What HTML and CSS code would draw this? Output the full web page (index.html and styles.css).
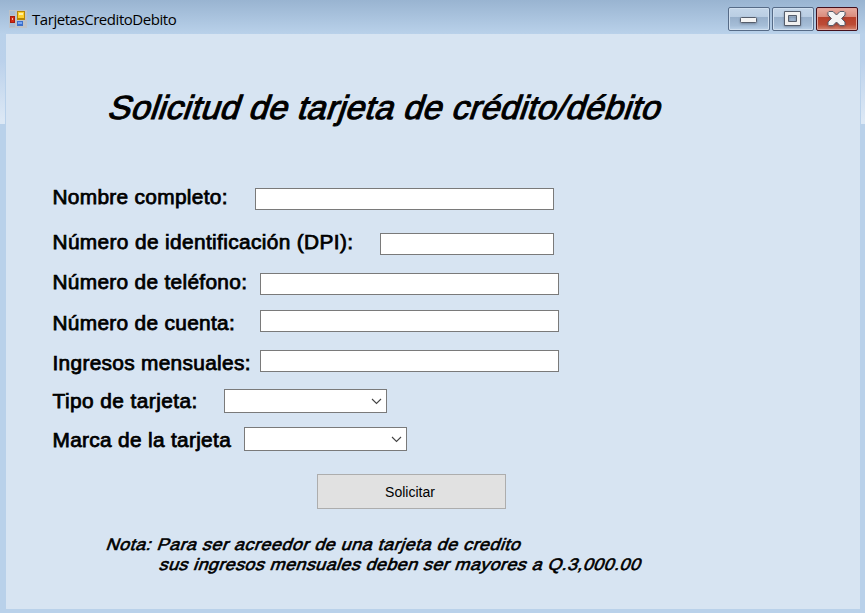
FILE: index.html
```html
<!DOCTYPE html>
<html lang="es">
<head>
<meta charset="utf-8">
<title>TarjetasCreditoDebito</title>
<link rel="stylesheet" href="styles.css">
</head>
<body>
<div class="window">
  <header class="titlebar">
    <svg class="app-icon" width="18" height="18" viewBox="0 0 18 18" shape-rendering="crispEdges">
      <path fill="#bfc3c8" d="M0 0h18v18H0z"/>
      <path fill="#a9bdd2" d="M1 1h5v4H1zM1 13h5v4H1z"/>
      <path fill="#a81c0c" d="M1 6h5v7H1z"/><path fill="#d42a14" d="M2 7h3v5H2z"/><path fill="#f3b5a8" d="M3 8h1v2H3z"/>
      <path fill="#b88705" d="M8 1h8v9H8z"/><path fill="#ffd02e" d="M9 2h6v6H9z"/><path fill="#fff0a0" d="M10 3h4v2h-4z"/>
      <path fill="#3b6fcc" d="M8 11h6v5H8z"/><path fill="#78a8f5" d="M9 12h4v2H9z"/>
    </svg>
    <span class="caption">TarjetasCreditoDebito</span>
    <div class="controls">
      <button class="control" aria-label="Minimizar">
        <svg width="42" height="24" viewBox="0 0 42 24"><rect x="12.5" y="10.5" width="16" height="5" rx="1" fill="#f4f4f4" stroke="#555d6b"/></svg>
      </button>
      <button class="control" aria-label="Maximizar">
        <svg width="42" height="24" viewBox="0 0 42 24"><path d="M12.5 4.5h16v14h-16zM16.5 8.5v6h8v-6z" fill="#f1f1f1" fill-rule="evenodd" stroke="#555d6b" stroke-linejoin="round"/></svg>
      </button>
      <button class="control close" aria-label="Cerrar">
        <svg width="42" height="24" viewBox="0 0 42 24"><path d="M13 4.500h4l3.500 3.500 3.500-3.500h4l1 1v2.500L25.500 11.500l3.500 3.500v2.500l-1 1h-4l-3.500-3.500-3.500 3.500h-4l-1-1V15l3.500-3.500L12 8V5.500z" fill="#f4f4f4" stroke="#555d6b" stroke-linejoin="round"/></svg>
      </button>
    </div>
  </header>
  <main class="client">
    <h1 class="heading">Solicitud de tarjeta de crédito/débito</h1>
    <form class="form">
      <div class="row row-name"><label for="name"><span>Nombre completo:</span></label><input id="name" type="text"></div>
      <div class="row row-dpi"><label for="dpi"><span>Número de identificación (DPI):</span></label><input id="dpi" type="text"></div>
      <div class="row row-phone"><label for="phone"><span>Número de teléfono:</span></label><input id="phone" type="text"></div>
      <div class="row row-account"><label for="account"><span>Número de cuenta:</span></label><input id="account" type="text"></div>
      <div class="row row-income"><label for="income"><span>Ingresos mensuales:</span></label><input id="income" type="text"></div>
      <div class="row row-type"><label><span>Tipo de tarjeta:</span></label>
        <div class="combo"><svg width="11" height="7" viewBox="0 0 11 7"><path d="M1 1l4.500 4.500L10 1" fill="none" stroke="#444" stroke-width="1.100"/></svg></div></div>
      <div class="row row-brand"><label><span>Marca de la tarjeta</span></label>
        <div class="combo"><svg width="11" height="7" viewBox="0 0 11 7"><path d="M1 1l4.500 4.500L10 1" fill="none" stroke="#444" stroke-width="1.100"/></svg></div></div>
      <button class="submit" type="button">Solicitar</button>
    </form>
    <div class="note">
      <p class="note-first">Nota: Para ser acreedor de una tarjeta de credito</p>
      <p class="note-second">sus ingresos mensuales deben ser mayores a Q.3,000.00</p>
    </div>
  </main>
</div>
</body>
</html>
```
FILE: styles.css
```css
* { box-sizing: border-box; }
body { margin: 0; font-family: "Liberation Sans", Arial, sans-serif; color: #000; }
.window {
  width: 865px;
  height: 613px;
  display: flex;
  flex-direction: column;
  padding: 0 5px 4px 6px;
  background:
    linear-gradient(#99b4d1, #b9d1ea) 0 0 / 100% 34px no-repeat,
    linear-gradient(#b9d1ea 0, #bbd1eb 30%, #dce8f5 95%, #dce8f5) 0 34px / 5px 90px no-repeat,
    linear-gradient(#b9d1ea 0, #bbd1eb 30%, #dce8f5 95%, #dce8f5) 100% 34px / 4px 90px no-repeat,
    #b9d1ea;
}
.titlebar { flex: none; height: 34px; display: flex; align-items: flex-start; padding-left: 3px; }
.app-icon { margin-top: 10px; flex: none; }
.caption {
  margin: 8px 0 0 5px;
  font: 15px/22px "Open Sans", "Noto Sans", sans-serif;
  letter-spacing: -.45px;
  white-space: nowrap;
}
.controls { display: flex; gap: 2px; margin: 7px 2px 0 auto; }
.control {
  width: 42px;
  height: 24px;
  padding: 0;
  border: 1px solid #566b87;
  border-radius: 2px;
  box-shadow: inset 0 0 0 1px #d0dfef;
  background: linear-gradient(#c4d6e9 0, #b9cde3 42%, #98b0cb 43%, #a5bdd7 80%, #bdd3ea);
}
.control svg { display: block; margin: -1px; filter: drop-shadow(0 1px 1px rgba(50, 60, 80, .4)); }
.control.close {
  border-color: #43101c;
  box-shadow: inset 0 0 0 1px #e3a59b;
  background: linear-gradient(#e8aca0 0, #d98a7b 42%, #b8402b 43%, #bd4b35 75%, #d68872);
}
.client { flex: 1; min-height: 0; background: #d7e4f2; }
.heading {
  margin: 53px 0 0 104px;
  width: max-content;
  font-size: 33.33px;
  line-height: 40px;
  font-weight: 400;
  letter-spacing: .2px;
  -webkit-text-stroke: 1px #000;
  transform: translateY(.5px) scaleX(1.028) skewX(-18deg);
  transform-origin: 0 50%;
  white-space: nowrap;
}
.form { margin: 58px 0 0 46px; display: flex; flex-direction: column; }
.row { display: flex; align-items: flex-start; height: 24px; }
.row label { flex: none; }
.row label span {
  display: block;
  width: max-content;
  font-size: 20px;
  line-height: 24px;
  white-space: nowrap;
  letter-spacing: .3px;
  -webkit-text-stroke: .75px #000;
  transform: translateX(.5px) scaleX(1.042);
  transform-origin: 0 50%;
}
.row input { height: 22px; width: 299px; margin: 0; padding: 0 4px; border: 1px solid #7a7a7a; background: #fff; font: 16px "Liberation Sans", sans-serif; }
.row-name label { width: 203px; }
.row-name input { margin-top: 3px; }
.row-dpi { margin-top: 21px; }
.row-dpi label { width: 328px; }
.row.row-dpi label span { letter-spacing: .35px; }
.row-dpi input { width: 174px; margin-top: 3px; }
.row-phone { margin-top: 16px; }
.row-phone label { width: 208px; }
.row-phone input { margin-top: 3px; }
.row-account { margin-top: 16px; }
.row-account label { width: 208px; margin-top: 1px; }
.row-income { margin-top: 16px; }
.row-income label { width: 208px; margin-top: 1px; }
.row-type { margin-top: 15px; }
.row-type label { width: 172px; }
.row.row-type label span { letter-spacing: .42px; }
.row-brand { margin-top: 14px; }
.row-brand label { width: 192px; margin-top: 1px; }
.combo {
  width: 163px;
  height: 24px;
  display: flex;
  align-items: center;
  justify-content: flex-end;
  padding-right: 4px;
  border: 1px solid #7a7a7a;
  background: #fff;
}
.submit {
  width: 189px;
  height: 35px;
  margin: 23px 0 0 265px;
  padding: 1px 3px 0 0;
  border: 1px solid #adadad;
  background: #e1e1e1;
  color: #000;
  font: 14px "Liberation Sans", sans-serif;
}
.note { margin: 26px 0 0 101px; }
.note p {
  width: max-content;
  margin: 0;
  font-size: 16.67px;
  line-height: 20px;
  white-space: nowrap;
  -webkit-text-stroke: .6px #000;
  transform: scaleX(1.08) skewX(-18deg);
  transform-origin: 0 50%;
}
.note .note-first { letter-spacing: .45px; }
.note .note-second { margin-left: 53px; letter-spacing: .36px; }
```
